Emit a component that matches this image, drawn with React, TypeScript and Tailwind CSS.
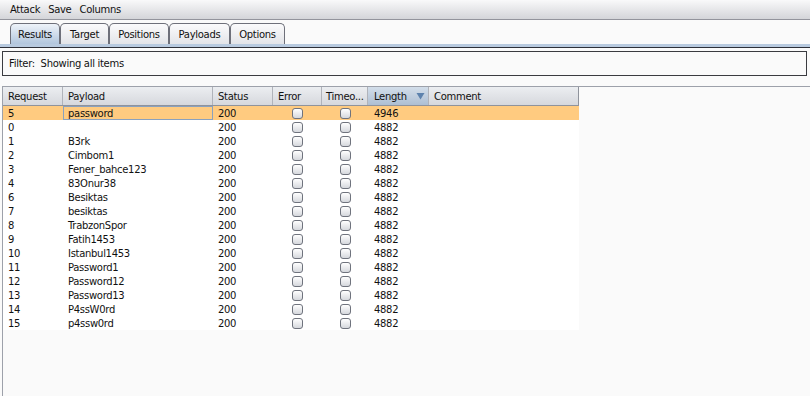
import React from 'react';

const rows: [string, string, string, string][] = [
  ['5', 'password', '200', '4946'],
  ['0', '', '200', '4882'],
  ['1', 'B3rk', '200', '4882'],
  ['2', 'Cimbom1', '200', '4882'],
  ['3', 'Fener_bahce123', '200', '4882'],
  ['4', '83Onur38', '200', '4882'],
  ['6', 'Besiktas', '200', '4882'],
  ['7', 'besiktas', '200', '4882'],
  ['8', 'TrabzonSpor', '200', '4882'],
  ['9', 'Fatih1453', '200', '4882'],
  ['10', 'Istanbul1453', '200', '4882'],
  ['11', 'Password1', '200', '4882'],
  ['12', 'Password12', '200', '4882'],
  ['13', 'Password13', '200', '4882'],
  ['14', 'P4ssW0rd', '200', '4882'],
  ['15', 'p4ssw0rd', '200', '4882'],
];

const tabs = [
  { label: 'Results', w: 'w-[50px]' },
  { label: 'Target', w: 'w-[49px]' },
  { label: 'Positions', w: 'w-[60px]' },
  { label: 'Payloads', w: 'w-[61px]' },
  { label: 'Options', w: 'w-[55px]' },
];

function Checkbox() {
  return (
    <div className="h-[11px] w-[11px] rounded-[3px] border border-[#6f737d] bg-gradient-to-b from-[#ffffff] to-[#d6d8dd]" />
  );
}

export default function App() {
  return (
    <div className="flex h-[396px] w-[810px] flex-col overflow-hidden bg-[#fafafa] font-['DejaVu_Sans',sans-serif] text-[10px] tracking-[-0.3px] text-[#111]">
      {/* menu bar */}
      <div className="flex h-[20px] shrink-0 items-center gap-[8px] border-b border-[#93949c] bg-gradient-to-b from-[#f9f9fa] to-[#d4d5d9] pl-[10px]">
        <span>Attack</span>
        <span>Save</span>
        <span>Columns</span>
      </div>

      {/* tabs */}
      <div className="flex h-[24px] shrink-0 items-end pl-[10px]">
        {tabs.map((t, i) => (
          <div
            key={t.label}
            className={`${t.w} flex h-[21px] items-center justify-center rounded-t-[5px] border border-b-0 border-[#6e707a] ${
              i === 0
                ? 'bg-gradient-to-b from-[#eef3f9] to-[#b2c6dd]'
                : 'bg-gradient-to-b from-[#fbfbfc] to-[#e3e4e8]'
            }`}
          >
            {t.label}
          </div>
        ))}
      </div>
      <div className="h-[4px] shrink-0 border-b border-[#2e3038] bg-[#b8cadf]" />

      {/* content */}
      <div className="flex flex-1 flex-col pt-[3px] pl-[2px]">
        <div className="mr-[3px] flex h-[25px] shrink-0 items-center border border-[#3a3b40] pl-[6px]">
          Filter:&nbsp;&nbsp;Showing all items
        </div>

        <div className="mt-[10px] flex-1 border-t border-l border-[#9da1aa]">
          <div className="w-[576px]">
            {/* header */}
            <div className="flex h-[19px] border-b border-[#8f939c] bg-gradient-to-b from-[#eceef1] to-[#d6d8dd]">
              <div className="flex w-[60px] items-center border-r border-[#b0b3ba] pl-[5px]">Request</div>
              <div className="flex w-[150px] items-center border-r border-[#b0b3ba] pl-[5px]">Payload</div>
              <div className="flex w-[60px] items-center border-r border-[#b0b3ba] pl-[5px]">Status</div>
              <div className="flex w-[49px] items-center border-r border-[#b0b3ba] pl-[5px]">Error</div>
              <div className="flex w-[46px] items-center border-r border-[#b0b3ba] pl-[4px]">Timeo...</div>
              <div className="flex w-[61px] items-center justify-between border-r border-[#b0b3ba] bg-gradient-to-b from-[#d3deea] to-[#aebfd3] pr-[3px] pl-[6px]">
                <span>Length</span>
                <svg width="9" height="8" viewBox="0 0 9 8">
                  <path d="M0.5 1 L8.5 1 L4.5 7.5 Z" fill="#5d82ad" />
                </svg>
              </div>
              <div className="flex w-[150px] items-center border-r border-[#8f939c] pl-[5px]">Comment</div>
            </div>

            {/* rows */}
            {rows.map((r, i) => (
              <div key={r[0]} className={`flex h-[14px] items-center ${i === 0 ? 'bg-[#ffcb80]' : 'bg-white'}`}>
                <div className="w-[60px] pl-[5px]">{r[0]}</div>
                <div
                  className={`flex h-[14px] w-[150px] items-center ${
                    i === 0 ? 'border border-[#8aa1be] pl-[4px]' : 'pl-[5px]'
                  }`}
                >
                  {r[1]}
                </div>
                <div className="w-[60px] pl-[5px]">{r[2]}</div>
                <div className="flex w-[49px] justify-center">
                  <Checkbox />
                </div>
                <div className="flex w-[46px] justify-center">
                  <Checkbox />
                </div>
                <div className="w-[61px] pl-[6px]">{r[3]}</div>
                <div className="w-[150px]" />
              </div>
            ))}
          </div>
        </div>
      </div>
    </div>
  );
}
